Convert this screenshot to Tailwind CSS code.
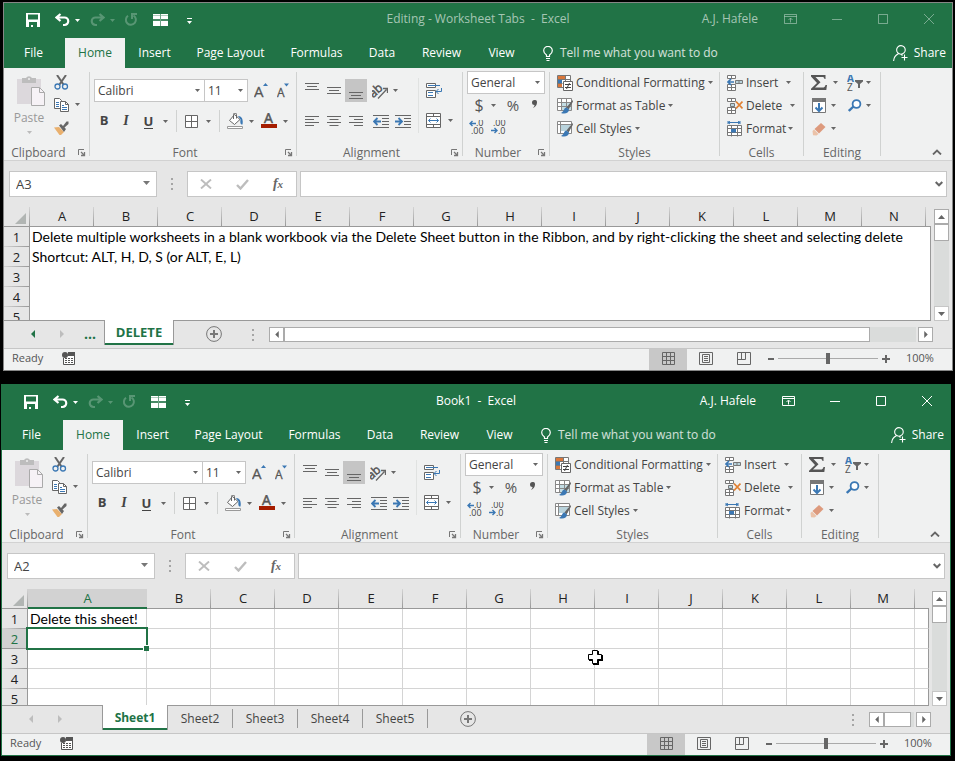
<!DOCTYPE html>
<html lang="en">
<head>
<meta charset="utf-8">
<title>Excel - Worksheet Tabs</title>
<script src="https://cdn.jsdelivr.net/npm/@tailwindcss/browser@4"></script>
</head>
<body class="bg-black min-h-screen pt-[2px] font-['Open_Sans',sans-serif] text-xs text-[#444]">

<!-- Shared icons -->
<svg class="hidden" aria-hidden="true">
  <symbol id="caret" viewBox="0 0 5 3"><path d="M0 0h5L2.5 3z" fill="currentColor"/></symbol>
  <symbol id="save" viewBox="0 0 14 14"><path fill="currentColor" fill-rule="evenodd" d="M0 0h14v14H0zM2 1.500v5h10v-5zM3 9v5h2v-2h2v2h4V9z"/></symbol>
  <symbol id="undo" viewBox="0 0 15 14"><path d="M5.500 1 1.500 4.500l4 3.500M2 4.500h7.500a3.500 3.500 0 0 1 0 7.500H8" fill="none" stroke="currentColor" stroke-width="2.200"/></symbol>
  <symbol id="repeat" viewBox="0 0 14 14"><path d="M9.500 2.500A5 5 0 1 1 4 2.700M8 6V1h5" fill="none" stroke="currentColor" stroke-width="2"/></symbol>
  <symbol id="split" viewBox="0 0 15 12"><path fill="currentColor" d="M0 0h7v5H0zM8 0h7v5H8zM0 7h7v5H0zM8 7h7v5H8z"/><path stroke="#217346" d="M0 1.500h7M8 1.500h7" opacity=".35"/><path d="M0 6h15M7.500 0v12" stroke="currentColor" opacity=".35"/></symbol>
  <symbol id="more" viewBox="0 0 5 6"><path fill="currentColor" d="M0 0h5v1H0zM0 3h5L2.500 6z"/></symbol>
  <symbol id="ribbonopt" viewBox="0 0 13 10"><path d="M.5.5h12v9H.5zM.5 2.500h12M6.500 8.500v-4M4.500 6l2-2 2 2" fill="none" stroke="currentColor"/></symbol>
  <symbol id="min" viewBox="0 0 10 10"><path d="M0 5.500h10" stroke="currentColor"/></symbol>
  <symbol id="max" viewBox="0 0 10 10"><path d="M.5.500h9v9h-9z" fill="none" stroke="currentColor"/></symbol>
  <symbol id="close" viewBox="0 0 10 10"><path d="M0 0l10 10M10 0L0 10" stroke="currentColor"/></symbol>
  <symbol id="bulb" viewBox="0 0 10 15"><path d="M3.500 10.500V9C1.500 7.500.7 6.500.7 4.700a4.300 4.300 0 0 1 8.600 0C9.300 6.500 8.500 7.500 6.500 9v1.500zM3 12.500h4M3.500 14.500h3" fill="none" stroke="currentColor" stroke-width="1.200"/></symbol>
  <symbol id="person" viewBox="0 0 15 16"><path d="M8 .6a4.300 4.300 0 1 1-.1 8.600A4.300 4.300 0 0 1 8 .6zM.6 16c.2-3.500 2-6 4.800-7.300M11.500 9.500v6M8.500 12.500h6M8.500 9.500l1 1" fill="none" stroke="currentColor" stroke-width="1.100"/></symbol>
  <symbol id="paste" viewBox="0 0 28 30"><path fill="#dcd8dc" d="M0 3h24v25H0z"/><path fill="#bdbdbd" d="M5 2h4a3.500 3.500 0 0 1 6 0h4v5H5z"/><circle cx="12" cy="3" r="1" fill="#f0f1f1"/><path d="M14.500 11.500h8l5 5v13h-13z" fill="#f6f2f6" stroke="#aaa"/><path d="M22.500 11.500v5h5" fill="none" stroke="#aaa"/></symbol>
  <symbol id="cut" viewBox="0 0 15 15"><path d="M3 0l6.500 9.500M12 0L5.500 9.500" stroke="#666" stroke-width="2"/><circle cx="3.500" cy="11.500" r="2.500" fill="none" stroke="#3b78b4" stroke-width="1.300"/><circle cx="11" cy="11.500" r="2.500" fill="none" stroke="#3b78b4" stroke-width="1.300"/></symbol>
  <symbol id="copy" viewBox="0 0 15 14"><path d="M.5.5h5l2 2v8h-7z" fill="#fff" stroke="#666"/><path d="M2 4.500h3M2 6.500h3M2 8.500h3" stroke="#3b78b4"/><path d="M6.500 3.500h5l3 3v7h-8z" fill="#fff" stroke="#666"/><path d="M11.500 3.500v3h3" fill="none" stroke="#666"/><path d="M8 7.500h2M8 9.500h5M8 11.500h5" stroke="#3b78b4"/></symbol>
  <symbol id="brush" viewBox="0 0 15 14"><path fill="#e9b06e" d="M0 6.500l5-.5 5 5-3 3h-1.500z"/><path fill="#666" d="M5 4.500l2-1.500 2 2 3.500-4.500h2V3l-4 3.500L12 8l-2 3z"/></symbol>
  <symbol id="launch" viewBox="0 0 8 8"><path d="M.5 6V.5H6" fill="none" stroke="#777"/><path d="M3 3l3 3M6.500 3v3.500H3" fill="none" stroke="#777" stroke-width="1.300"/></symbol>
  <symbol id="grow" viewBox="0 0 16 16"><text x="0" y="14" font-family="Open Sans" font-size="15" fill="#555" stroke="#555" stroke-width=".3">A</text><path fill="#3b78b4" d="M9 3h5l-2.500-3z"/></symbol>
  <symbol id="shrink" viewBox="0 0 16 16"><text x="0" y="14" font-family="Open Sans" font-size="12" fill="#555" stroke="#555" stroke-width=".3">A</text><path fill="#3b78b4" d="M7 .5h5l-2.500 3z"/></symbol>
  <symbol id="borders" viewBox="0 0 13 13"><path d="M.5.5h12v12H.5zM6.500.5v12M.5 6.500h12" fill="#fff" stroke="#666"/></symbol>
  <symbol id="bucket" viewBox="0 0 16 16"><path d="M7.500 1.500L2.500 7.500 7.500 11.500l5.500-5z" fill="#fff" stroke="#666"/><path d="M6.500 6V1.500a1.500 1.500 0 0 1 3 0v4" fill="none" stroke="#666"/><path d="M11 3c3.500 0 5.500 3 4.500 8.500-2 0-2.500-1.500-2-5z" fill="#3b78b4"/><path d="M.5 13.500h15v2H.5z" fill="#fff" stroke="#999"/></symbol>
  <symbol id="fontcolor" viewBox="0 0 16 16"><text x="3" y="10" font-family="Open Sans" font-size="14" fill="#555" stroke="#555" stroke-width=".5">A</text><path fill="#a51d00" d="M0 11h16v4H0z"/></symbol>
  <symbol id="vtop" viewBox="0 0 14 16"><path d="M0 .5h14M2 3.500h10M0 6.500h14" stroke="#666"/></symbol>
  <symbol id="vmid" viewBox="0 0 14 16"><path d="M0 4.500h14M2 7.500h10M0 10.500h14" stroke="#666"/></symbol>
  <symbol id="vbot" viewBox="0 0 14 16"><path d="M0 8.500h14M2 11.500h10M0 14.500h14" stroke="#666"/></symbol>
  <symbol id="hleft" viewBox="0 0 14 11"><path d="M0 .5h14M0 3.500h9M0 6.500h14M0 9.500h9" stroke="#666"/></symbol>
  <symbol id="hmid" viewBox="0 0 14 11"><path d="M0 .5h14M2.500 3.500h9M0 6.500h14M2.500 9.500h9" stroke="#666"/></symbol>
  <symbol id="hright" viewBox="0 0 14 11"><path d="M0 .5h14M5 3.500h9M0 6.500h14M5 9.500h9" stroke="#666"/></symbol>
  <symbol id="orient" viewBox="0 0 16 16"><text x="-2" y="11" font-family="Open Sans" font-size="12" fill="#555" stroke="#555" stroke-width=".5" transform="rotate(-42 5 9)">ab</text><path d="M6 15.500L14.500 6.500M11 5.500h4.500v4.500" fill="none" stroke="#666" stroke-width="1.300"/></symbol>
  <symbol id="outdent" viewBox="0 0 16 13"><path d="M0 .5h16M9 3.500h7M9 6.500h7M9 9.500h7M0 12.500h16" stroke="#666"/><path d="M1 6.500h7M4.500 3L1 6.500 4.500 10" fill="none" stroke="#3b78b4" stroke-width="1.800"/></symbol>
  <symbol id="indent" viewBox="0 0 16 13"><path d="M0 .5h16M9 3.500h7M9 6.500h7M9 9.500h7M0 12.500h16" stroke="#666"/><path d="M0 6.500h7M3.500 3L7 6.500 3.500 10" fill="none" stroke="#3b78b4" stroke-width="1.800"/></symbol>
  <symbol id="wrap" viewBox="0 0 16 15"><path d="M.5.5h9v4h-9zM.5 7.500h9v7h-9z" fill="#fff" stroke="#666"/><path d="M2 2.500h12M2 9.500h5M2 12.500h5M15.500 5v3.500H10M12.500 6L10 8.500l2.500 2.500" fill="none" stroke="#3b78b4"/></symbol>
  <symbol id="merge" viewBox="0 0 15 15"><path d="M.5.5h14v14H.5zM.5 3.500h14M.5 11.500h14M7.500.5v3M7.500 11.500v3" fill="#fff" stroke="#666"/><path d="M2.500 7.500h10M4.500 5.500l-2 2 2 2M10.500 5.500l2 2-2 2" fill="none" stroke="#3b78b4"/></symbol>
  <symbol id="incdec" viewBox="0 0 16 14"><text x="7" y="6" font-family="Open Sans" font-size="9" fill="#444">.0</text><text x="2" y="14" font-family="Open Sans" font-size="9" fill="#444">.00</text><path d="M1 3.500h6M3.500 1L1 3.500 3.500 6" fill="none" stroke="#3b78b4" stroke-width="1.400"/></symbol>
  <symbol id="decdec" viewBox="0 0 16 14"><text x="2" y="6" font-family="Open Sans" font-size="9" fill="#444">.00</text><text x="7" y="14" font-family="Open Sans" font-size="9" fill="#444">.0</text><path d="M0 10.500h6M3.500 8L6 10.500 3.500 13" fill="none" stroke="#3b78b4" stroke-width="1.400"/></symbol>
  <symbol id="cond" viewBox="0 0 16 16"><path d="M.5.5h13v12H.5z" fill="#fff" stroke="#777"/><path fill="#d9773b" d="M1 1h7v3H1zM1 8h4v4H1z"/><path fill="#3b78b4" d="M1 4.500h4V8H1z"/><path d="M8.500.5v6M.5 4.500h13M.5 8.500h5" stroke="#777"/><path d="M6.500 6.500h9v9h-9z" fill="#fff" stroke="#666"/><path d="M8 9.500h6M8 12.500h6M12.500 8l-3 6" stroke="#444"/></symbol>
  <symbol id="fmttable" viewBox="0 0 16 16"><path d="M.5.5h14v12H.5z" fill="#fff" stroke="#888"/><path fill="#c3dde4" d="M5 4h9v8H5z"/><path d="M4.500.5v12M9.500.5v12M.5 4.500h14M.5 8.500h14" stroke="#888"/><path d="M15.500 2L9.500 9.500l2 2 4.500-8z" fill="#666"/><path d="M9.500 9.500c-3 .5-2 4-5.500 5.500 4 1.500 8 0 8-3.500z" fill="#3b78b4"/></symbol>
  <symbol id="cellsty" viewBox="0 0 16 16"><path d="M.5.5h14v12H.5z" fill="#fff" stroke="#888"/><path fill="#b9d3dc" d="M4 4h9v6H4z"/><path d="M3.500.5v12M.5 3.500h14" stroke="#888"/><path d="M15.500 2L9.500 9.500l2 2 4.500-8z" fill="#666"/><path d="M9.500 9.500c-3 .5-2 4-5.500 5.500 4 1.500 8 0 8-3.500z" fill="#3b78b4"/></symbol>
  <symbol id="cins" viewBox="0 0 16 16"><path d="M.5.5h8v3h-8zM4.500.5v3M.5 9.500h8v6h-8zM4.500 9.500v6M.5 12.500h8" fill="#fff" stroke="#777"/><path d="M8.500 5.500h7v3h-7z" fill="#b9d3dc" stroke="#777"/><path d="M12 5.500v3" stroke="#777"/><path d="M1 7h6M4 4L1 7l3 3" fill="none" stroke="#3b78b4" stroke-width="1.700"/></symbol>
  <symbol id="cdel" viewBox="0 0 16 16"><path d="M.5.500h8v3h-8zM4.500.5v3M.5 9.500h8v6h-8zM4.500 9.500v6M.5 12.500h8" fill="#fff" stroke="#777"/><path d="M3.500 5.500h4v3h-4z" fill="#b9d3dc" stroke="#777"/><path d="M9 3.500l6.500 7M15.500 3.500l-6.500 7" stroke="#e08032" stroke-width="1.800"/></symbol>
  <symbol id="cfmt" viewBox="0 0 16 16"><path d="M1 1.500h12M1 0v3M13 0v3M3 0L1 1.500 3 3M11 0l2 1.500L11 3" fill="none" stroke="#3b78b4"/><path d="M.5 4.500h14v10H.5z" fill="#fff" stroke="#777"/><path d="M4.500 4.500v11M10.500 4.500v11M.5 7.500h14M.5 11.500h14" stroke="#777"/><path fill="#3b78b4" d="M4 8h5v3.500H4z"/></symbol>
  <symbol id="sum" viewBox="0 0 16 15"><path fill="#555" d="M0 0h14.500v4h-1c-.3-1.500-.8-2-2.500-2H4.500l5 5.300L4 12.500h7.500c1.700 0 2.500-.5 3-2.500H16l-.7 5H0v-1.300L6 8 0 1.500z"/></symbol>
  <symbol id="fill" viewBox="0 0 14 15"><path d="M.5.5h13v14H.5z" fill="#fff" stroke="#777"/><path fill="#777" d="M0 0h14v4H0z"/><path d="M7 5v8M3.500 9.500L7 13l3.500-3.500" fill="none" stroke="#3b78b4" stroke-width="2"/></symbol>
  <symbol id="eraser" viewBox="0 0 14 14"><path fill="#dd9a7d" d="M9 1l4.500 4L7 11.500 2.500 7z"/><path fill="#ebc2a8" d="M2 7.500L6.500 12l-2 1.500-3.500-.3L.5 9z"/></symbol>
  <symbol id="sort" viewBox="0 0 16 16"><text x="0" y="7" font-family="Open Sans" font-size="10" font-weight="bold" fill="#3b78b4">A</text><text x="0" y="16" font-family="Open Sans" font-size="10" fill="#555">Z</text><path fill="#666" d="M8 5h8v1.500L13 9v4h-2V9L8 6.500z"/></symbol>
  <symbol id="find" viewBox="0 0 14 13"><circle cx="8.500" cy="5" r="3.900" fill="#fff" stroke="#3b78b4" stroke-width="1.800"/><path d="M5.500 7.500L.8 12" stroke="#3b78b4" stroke-width="2.400"/></symbol>
  <symbol id="chevup" viewBox="0 0 10 6"><path d="M1 5.500l4-4 4 4" fill="none" stroke="#666" stroke-width="1.800"/></symbol>
  <symbol id="chevdn" viewBox="0 0 8 6"><path d="M.7 1L4 4.300 7.300 1" fill="none" stroke="#666" stroke-width="2"/></symbol>
  <symbol id="xmark" viewBox="0 0 12 10"><path d="M1 .5l10 9M11 .5l-10 9" stroke="#bdbdbd" stroke-width="1.900"/></symbol>
  <symbol id="check" viewBox="0 0 13 11"><path d="M1 6l3.500 3.500L12 1" fill="none" stroke="#bdbdbd" stroke-width="2.400"/></symbol>
  <symbol id="dots" viewBox="0 0 2 12"><path fill="#a5a5a5" d="M0 0h2v2H0zM0 5h2v2H0zM0 10h2v2H0z"/></symbol>
  <symbol id="corner" viewBox="0 0 11 11"><path fill="#b1b5b3" d="M11 0v11H0z"/></symbol>
  <symbol id="plus" viewBox="0 0 16 16"><circle cx="8" cy="8" r="7.400" fill="none" stroke="#777"/><path d="M8 4v8M4 8h8" stroke="#777" stroke-width="2"/></symbol>
  <symbol id="tril" viewBox="0 0 4 8"><path fill="currentColor" d="M4 0v8L0 4z"/></symbol>
  <symbol id="trir" viewBox="0 0 4 8"><path fill="currentColor" d="M0 0v8l4-4z"/></symbol>
  <symbol id="triu" viewBox="0 0 7 4"><path fill="currentColor" d="M0 4h7L3.500 0z"/></symbol>
  <symbol id="trid" viewBox="0 0 7 4"><path fill="currentColor" d="M0 0h7L3.500 4z"/></symbol>
  <symbol id="macro" viewBox="0 0 13 13"><path d="M1.500 6v6.500h11V1H7" fill="#fff" stroke="#555"/><path fill="#555" d="M6 0h7v4H6z"/><circle cx="3" cy="3" r="3" fill="#555"/><path d="M3 6.500h8M3 8.500h8M3 10.500h8" stroke="#555" stroke-dasharray="2 1"/></symbol>
  <symbol id="vnormal" viewBox="0 0 13 13"><path d="M.5.5h12v12H.5zM4.500.5v12M8.500.5v12M.5 4.500h12M.5 8.500h12" fill="none" stroke="#666"/></symbol>
  <symbol id="vlayout" viewBox="0 0 14 13"><path d="M.5.5h13v12H.5zM3.500 2.500h7v8h-7zM5 4.500h4M5 6.500h4M5 8.500h4" fill="none" stroke="#666"/></symbol>
  <symbol id="vbreak" viewBox="0 0 14 13"><path d="M.5.5h13v12H.5zM.5 7.500h8v-7M4.500.5v7" fill="none" stroke="#666"/></symbol>
  <symbol id="cellcursor" viewBox="0 0 15 15"><path d="M5 1h6v4h4v6h-4v4H5v-4H1V5h4z" fill="#000"/><path d="M4.500.5h5v4h4v5h-4v4h-5v-4h-4v-5h4z" fill="#fff" stroke="#000"/></symbol>
</svg>

<main id="desk" class="flex flex-col gap-[13px]"></main>

<script>
const ic = (id, size, extra = '') => `<svg class="shrink-0 ${size} ${extra}" aria-hidden="true"><use href="#${id}"/></svg>`;
const caret = (extra = 'text-[#666]') => ic('caret', 'w-[5px] h-[3px]', extra);
const btn = (label, cls, inner) => `<button type="button" aria-label="${label}" class="flex items-center justify-center shrink-0 ${cls}">${inner}</button>`;
const drop = label => btn(label + ' options', 'w-[5px] h-5', caret());
const sep = '<div class="w-px my-1 bg-[#d0d2d1] shrink-0"></div>';
const combo = (id, label, value, cls) => `
  <div class="relative shrink-0 h-[23px] ${cls}">
    <select id="${id}" aria-label="${label}" class="appearance-none w-full h-full border border-[#c6c6c6] bg-white pl-[3px] text-[#444] outline-none"><option>${value}</option></select>
    ${ic('caret', 'w-[5px] h-[3px]', 'absolute right-[5px] top-[10px] text-[#666] pointer-events-none')}
  </div>`;
const group = (label, width, body, launcher = true) => `
  <section aria-label="${label}" class="flex flex-col shrink-0 ${width}">
    <div class="flex-1 flex">${body}</div>
    <div class="flex h-[15px] items-center text-[#666] leading-4">
      <span class="flex-1 text-center">${label}</span>
      ${launcher ? btn(label + ' settings', 'w-4 h-4', ic('launch', 'w-[8px] h-[8px]', 'ml-[2px] mt-px')) : ''}
    </div>
  </section>${sep}`;
const textBtn = (icon, text, gap) => `<button type="button" class="flex items-center h-[23px] text-[#444] whitespace-nowrap">${ic(icon, 'w-4 h-4')}<span class="ml-[3px]">${text}</span>${ic('caret', 'w-[5px] h-[3px]', gap + ' text-[#666]')}</button>`;

const ribbon = k => `
<div class="flex h-[92px] bg-[#f0f1f1]">
  ${group('Clipboard', 'w-[85px]', `
    <button type="button" class="flex flex-col items-center w-[42px] ml-[4px] pt-2 text-[#999]">${ic('paste', 'w-[28px] h-[30px]', 'ml-[4px]')}<span class="mt-[3px] leading-[18px]">Paste</span>${ic('caret', 'w-[5px] h-[3px]', 'mt-[4px] text-[#bbb]')}</button>
    <div class="flex flex-col ml-[4px] pt-[3px]">
      ${btn('Cut', 'w-[15px] h-[22px]', ic('cut', 'w-[15px] h-[15px]'))}
      <div class="flex items-center">${btn('Copy', 'w-[15px] h-[23px]', ic('copy', 'w-[15px] h-[14px]'))}<div class="w-[6px]"></div>${drop('Copy')}</div>
      ${btn('Format Painter', 'w-[15px] h-[23px]', ic('brush', 'w-[15px] h-[14px]'))}
    </div>`)}
  ${group('Font', 'w-[206px]', `
    <div class="flex flex-col pt-[11px]">
      <div class="flex items-center pl-1">
        ${combo('font' + k, 'Font', 'Calibri', 'w-[111px]')}
        ${combo('size' + k, 'Font size', '11', 'w-[44px] -ml-px')}
        ${btn('Increase font size', 'w-[16px] h-5 ml-[6px]', ic('grow', 'w-4 h-4'))}
        ${btn('Decrease font size', 'w-[16px] h-5 ml-[7px]', ic('shrink', 'w-4 h-4'))}
      </div>
      <div class="flex items-center h-[22px] mt-[8px] pl-[3px] text-[#444]">
        ${btn('Bold', 'w-[22px]', '<b class="text-[13px]">B</b>')}
        ${btn('Italic', 'w-[22px]', `<i class="text-[14px] font-['Liberation_Serif',serif] font-bold">I</i>`)}
        ${btn('Underline', 'w-[23px]', '<span class="text-[13px] leading-[14px] font-bold border-b border-[#444]">U</span>')}
        ${btn('Underline options', 'w-[11px] h-5', caret())}
        <div class="w-px h-[22px] ml-[5px] bg-[#d0d2d1]"></div>
        ${btn('Borders', 'w-[29px]', ic('borders', 'w-[13px] h-[13px]'))}${drop('Borders')}
        <div class="w-px h-[22px] ml-[8px] bg-[#d0d2d1]"></div>
        ${btn('Fill Color', 'w-[29px]', ic('bucket', 'w-4 h-4'))}${drop('Fill Color')}
        ${btn('Font Color', 'w-[29px]', ic('fontcolor', 'w-4 h-4'))}${drop('Font Color')}
      </div>
    </div>`)}
  ${group('Alignment', 'w-[165px]', `
    <div class="flex flex-col w-[121px] pt-[11px] pl-1">
      <div class="flex items-center h-[23px]">
        ${btn('Top Align', 'w-[22px]', ic('vtop', 'w-[14px] h-4'))}
        ${btn('Middle Align', 'w-[22px]', ic('vmid', 'w-[14px] h-4'))}
        ${btn('Bottom Align', 'w-[22px] h-[23px] bg-[#c5c5c5]', ic('vbot', 'w-[14px] h-4', 'mt-[3px]'))}
        ${btn('Orientation', 'w-[26px]', ic('orient', 'w-4 h-4'))}${drop('Orientation')}
      </div>
      <div class="flex items-center h-[22px] mt-[8px]">
        ${btn('Align Left', 'w-[22px]', ic('hleft', 'w-[14px] h-[11px]'))}
        ${btn('Center', 'w-[22px]', ic('hmid', 'w-[14px] h-[11px]'))}
        ${btn('Align Right', 'w-[22px]', ic('hright', 'w-[14px] h-[11px]'))}
        ${btn('Decrease Indent', 'w-[22px] ml-[3px]', ic('outdent', 'w-4 h-[13px]'))}
        ${btn('Increase Indent', 'w-[22px]', ic('indent', 'w-4 h-[13px]'))}
      </div>
    </div>
    <div class="w-px h-[55px] mt-[10px] bg-[#e0e2e1]"></div>
    <div class="flex flex-col pt-[11px]">
      <div class="flex items-center h-[22px]">${btn('Wrap Text', 'w-[29px]', ic('wrap', 'w-4 h-[15px]'))}</div>
      <div class="flex items-center h-[22px] mt-[8px]">${btn('Merge', 'w-[29px]', ic('merge', 'w-[15px] h-[15px]'))}${drop('Merge')}</div>
    </div>`)}
  ${group('Number', 'w-[86px]', `
    <div class="flex flex-col pt-[3px] pl-1">
      ${combo('num' + k, 'Number format', 'General', 'w-[78px]')}
      <div class="flex items-center h-[22px] text-[#555]">
        ${btn('Accounting', 'w-[24px]', '<span class="text-base">$</span>')}${drop('Accounting')}
        ${btn('Percent', 'w-[34px]', '<span class="text-[15px]">%</span>')}
        ${btn('Comma', 'w-[8px]', `<svg class="w-[5px] h-[8px] mb-[3px]" viewBox="0 0 5 8"><path d="M2.500 0a2.300 2.300 0 0 1 2.500 2.500C5 5 3.500 7 1 8c1-1.300 1.500-2 1.500-3A2.300 2.300 0 0 1 2.500 0z" fill="#555"/></svg>`)}
      </div>
      <div class="flex items-center h-[22px] pl-[2px] gap-[6px]">
        ${btn('Increase Decimal', 'w-4', ic('incdec', 'w-4 h-[14px]', 'overflow-visible'))}
        ${btn('Decrease Decimal', 'w-4', ic('decdec', 'w-4 h-[14px]', 'overflow-visible'))}
      </div>
    </div>`)}
  ${group('Styles', 'w-[169px]', `
    <div class="flex flex-col items-start pt-[3px] pl-[7px]">
      ${textBtn('cond', 'Conditional Formatting', 'ml-[3px]')}
      ${textBtn('fmttable', 'Format as Table', 'ml-[3px]')}
      ${textBtn('cellsty', 'Cell Styles', 'ml-[3px]')}
    </div>`, false)}
  ${group('Cells', 'w-[83px]', `
    <div class="flex flex-col items-start pt-[3px] pl-[7px]">
      ${textBtn('cins', 'Insert', 'ml-[8px]')}
      ${textBtn('cdel', 'Delete', 'ml-[8px]')}
      ${textBtn('cfmt', 'Format', 'ml-[2px]')}
    </div>`, false)}
  ${group('Editing', 'w-[76px]', `
    <div class="flex flex-col pt-[3px] pl-[7px]">
      <div class="flex items-center h-[23px]">${btn('AutoSum', 'w-4', ic('sum', 'w-4 h-[15px]'))}<div class="w-[6px]"></div>${drop('AutoSum')}<div class="w-[9px]"></div>${btn('Sort and Filter', 'w-4', ic('sort', 'w-4 h-4'))}<div class="w-[3px]"></div>${drop('Sort')}</div>
      <div class="flex items-center h-[23px]">${btn('Fill', 'w-4', ic('fill', 'w-[14px] h-[15px]'))}<div class="w-[4px]"></div>${drop('Fill')}<div class="w-[11px]"></div>${btn('Find and Select', 'w-4', ic('find', 'w-[14px] h-[13px]'))}<div class="w-[3px]"></div>${drop('Find')}</div>
      <div class="flex items-center h-[23px]">${btn('Clear', 'w-4', ic('eraser', 'w-[14px] h-[14px]'))}<div class="w-[4px]"></div>${drop('Clear')}</div>
    </div>`, false)}
  <div class="flex-1 flex items-end justify-end pr-[10px] pb-[5px]">${btn('Collapse the Ribbon', 'w-[10px]', ic('chevup', 'w-[10px] h-[6px]'))}</div>
</div>`;

const vline = 'bg-[linear-gradient(to_bottom,#d4d4d4,#999)] bg-[length:1px_100%] bg-right bg-no-repeat';
const hline = 'bg-[linear-gradient(to_right,#d4d4d4,#999)] bg-[length:100%_1px] bg-bottom bg-no-repeat';

function sheet(o) {
  const cols = o.columns.split('');
  const head = cols.map((c, i) => `<th scope="col" class="h-5 p-0 pb-px font-normal leading-4 border-b ${o.sel && i === 0
      ? 'bg-[#d2d2d2] text-[#217346] border-b-2 border-[#217346]' : 'text-[#222] border-[#999] ' + vline}">${c}</th>`).join('');
  const line = o.grid ? 'border-r border-b border-[#d4d4d4]' : '';
  const rows = [1, 2, 3, 4, 5].map((n, r) => `<tr class="h-5">
      <th scope="row" class="p-0 h-5 font-normal border-r border-[#999] ${o.sel && r === 1 ? 'bg-[#d2d2d2]! text-[#217346] border-b' : 'text-[#222] ' + hline}">${n}</th>
      ${cols.map((c, i) => `<td class="relative p-0 h-5 ${line} ${i === 0 ? "pl-[2px] font-['Lato',sans-serif] text-sm leading-[18px] text-black whitespace-nowrap [font-variant-ligatures:none]" : ''}">${i === 0 && o.text[r] ? o.text[r] : ''}${o.sel && i === 0 && r === 1
        ? '<span class="absolute z-10 -left-[2px] -top-[2px] -right-[2px] -bottom-[2px] border-2 border-[#217346]"><span class="absolute -right-[3px] -bottom-[3px] w-[6px] h-[6px] bg-[#217346] border-l border-t border-white"></span></span>' : ''}</td>`).join('')}
      <td class="p-0 border-r border-r-[#999] ${o.grid ? 'border-b border-b-[#d4d4d4]' : ''}"></td>
    </tr>`).join('');
  return `
  <div class="flex">
    <div class="relative flex-1 min-w-0 overflow-hidden border-b border-[#999] ${o.height}">
      <table class="table-fixed w-full border-separate border-spacing-0 bg-white text-[13px] leading-[18px]">
        <colgroup><col class="w-[26px]">${cols.map((c, i) => `<col class="${i === 0 ? o.first : 'w-[64px]'}">`).join('')}<col></colgroup>
        <thead class="bg-[#e6e6e6]"><tr>
          <th class="h-5 p-0 border-b border-[#999] ${vline}">${ic('corner', 'w-[11px] h-[11px]', 'ml-[11px] mt-[3px]')}</th>${head}<th class="p-0 border-b border-[#999]"></th></tr></thead>
        <tbody class="[&_th]:bg-[#e6e6e6]">${rows}</tbody>
      </table>
      ${o.sel ? ic('cellcursor', 'w-[15px] h-[15px]', 'absolute left-[586px] top-[61px]') : ''}
    </div>
    <div class="flex flex-col w-[21px] pl-[3px] pr-[3px] pt-[2px] text-[#666]">
      ${btn('Scroll up', 'h-[15px] w-full border border-[#ababab] bg-white', ic('triu', 'w-[7px] h-[4px]'))}
      <div class="flex-1 bg-[#dadcdb]"><div class="h-[17px] border border-[#ababab] bg-white"></div></div>
      ${btn('Scroll down', 'h-[15px] w-full border border-[#c6c6c6] bg-white', ic('trid', 'w-[7px] h-[4px]'))}
    </div>
  </div>`;
}

function excel(o, k) {
  const dim = o.active ? 'text-white' : 'text-white/60';
  const ctl = o.active ? 'text-white' : 'text-white/40';
  const tabs = [['File', 'w-[59px]'], ['Home', 'w-[60px] ml-[2px] bg-[#f0f1f1] text-[#217346]'], ['Insert', 'w-[59px]'], ['Page Layout', 'w-[93px]'],
    ['Formulas', 'w-[79px]'], ['Data', 'w-[52px]'], ['Review', 'w-[67px]'], ['View', 'w-[53px]']];
  return `
<article aria-label="${o.title}" class="border ${o.frame} bg-[#e6e6e6]">
  <header class="bg-[#217346] text-white">
    <div class="grid grid-cols-[1fr_auto_1fr] items-center h-[35px] pb-[3px]">
      <div class="flex items-center pl-[22px] pt-[2px] text-white">
        ${btn('Save', 'w-[14px]', ic('save', 'w-[14px] h-[14px]'))}
        ${btn('Undo', 'w-[15px] ml-[15px]', ic('undo', 'w-[15px] h-[14px]'))}
        ${btn('Undo list', 'w-[5px] ml-[5px]', caret('text-white'))}
        ${btn('Redo', 'w-[15px] ml-[10px] text-white/25', ic('undo', 'w-[15px] h-[14px]', '-scale-x-100'))}
        ${btn('Redo list', 'w-[5px] ml-[5px]', caret('text-white/25'))}
        ${btn('Repeat', 'w-[14px] ml-[9px] text-white/25', ic('repeat', 'w-[14px] h-[14px]'))}
        ${btn('View side by side', 'w-[15px] ml-[15px]', ic('split', 'w-[15px] h-[12px]'))}
        ${btn('Customize toolbar', 'w-[5px] ml-[19px]', ic('more', 'w-[5px] h-[6px]', 'mt-[2px]'))}
      </div>
      <h1 class="${dim} whitespace-pre">${o.title}</h1>
      <div class="flex items-center justify-end">
        <span class="mr-[10px] ${dim}">A.J. Hafele</span>
        <div class="flex ${ctl}">
          ${btn('Ribbon display options', 'w-[46px] h-8', ic('ribbonopt', 'w-[13px] h-[10px]', 'mr-px'))}
          ${btn('Minimize', 'w-[46px] h-8', ic('min', 'w-[10px] h-[10px]'))}
          ${btn('Maximize', 'w-[46px] h-8', ic('max', 'w-[10px] h-[10px]'))}
          ${btn('Close', 'w-[46px] h-8', ic('close', 'w-[10px] h-[10px]'))}
        </div>
      </div>
    </div>
    <nav class="flex h-[30px]">
      ${tabs.map(t => `<button type="button" class="shrink-0 ${t[1]}">${t[0]}</button>`).join('')}
      <button type="button" class="flex items-center ml-[15px] text-white/80">${ic('bulb', 'w-[10px] h-[15px]', 'text-white')}<span class="ml-[7px]">Tell me what you want to do</span></button>
      <button type="button" class="flex items-center ml-auto mr-[6px]">${ic('person', 'w-[15px] h-4')}<span class="ml-[6px]">Share</span></button>
    </nav>
  </header>
  ${ribbon(k)}
  <div class="flex items-center border-t border-[#d2d2d2] px-[5px] py-[10px]">
    <div class="relative w-[148px] h-[26px]">
      <input id="name${k}" aria-label="Name Box" value="${o.cell}" class="w-full h-full border border-[#c6c6c6] bg-white pl-[6px] text-[13px] text-[#444] outline-none">
      ${ic('trid', 'w-[7px] h-[4px]', 'absolute right-[7px] top-[10px] text-[#777]')}
    </div>
    ${ic('dots', 'w-[2px] h-[12px]', 'mx-[14px]')}
    <div class="flex items-center justify-around w-[110px] h-[26px] border border-[#c6c6c6] bg-white">
      ${btn('Cancel', 'w-5', ic('xmark', 'w-3 h-[10px]'))}
      ${btn('Enter', 'w-5', ic('check', 'w-[13px] h-[11px]'))}
      ${btn('Insert Function', 'w-5', `<i class="font-['Liberation_Serif',serif] font-bold text-[#666] text-sm leading-4">f<span class="text-[11px]">x</span></i>`)}
    </div>
    <div class="relative flex-1 h-[26px] ml-[3px]">
      <input id="formula${k}" aria-label="Formula bar" class="w-full h-full border border-[#c6c6c6] bg-white px-2 outline-none">
      ${ic('chevdn', 'w-[8px] h-[6px]', 'absolute right-[4px] top-[10px]')}
    </div>
  </div>
  ${sheet(o)}
  <div class="flex items-stretch h-[27px]">
    <div class="flex items-center w-[100px] shrink-0 -mt-[2px]">
      ${btn('Previous sheet', 'w-1 ml-[27px] ' + o.prev, ic('tril', 'w-1 h-2'))}
      ${btn('Next sheet', 'w-1 ml-[25px] text-[#bdbdbd]', ic('trir', 'w-1 h-2'))}
      ${o.grid ? '' : '<button type="button" aria-label="More sheets" class="ml-[20px] text-sm font-bold text-[#217346]">...</button>'}
    </div>
    ${o.tabs.map((t, i) => i === 0
      ? `<button type="button" class="relative -mt-px h-[25px] pt-px border-x border-[#999] bg-white font-bold text-[#217346] shadow-[inset_0_-2px_#217346] ${o.tabw}">${t}</button>`
      : `<button type="button" class="h-[19px] mt-[3px] w-[65px] border-r border-[#999] leading-[18px] text-[#444]">${t}</button>`).join('')}
    ${btn('New sheet', 'w-4 ml-[32px]', ic('plus', 'w-4 h-4', '-mt-px'))}
    <div class="flex items-center text-[#666] ${o.hscroll} pr-[19px]">
      ${ic('dots', 'w-[2px] h-[12px]', 'mr-[15px]')}
      ${btn('Scroll left', 'w-[15px] h-[15px] border border-[#ababab] bg-white', ic('tril', 'w-1 h-[7px]'))}
      <div class="flex flex-1 h-[15px] bg-[#dadcdb]"><div class="flex-1 border border-[#ababab] bg-white"></div><div class="${o.rest}"></div></div>
      ${btn('Scroll right', 'w-[15px] h-[15px] ml-[2px] border border-[#ababab] bg-white', ic('trir', 'w-1 h-[7px]'))}
    </div>
  </div>
  <footer class="flex items-center h-[22px] border-t border-[#c6c6c6] bg-[#f0f1f1] text-[11px] text-[#555]">
    <span class="ml-[8px] w-[50px] pb-[2px]">Ready</span>
    ${btn('Record macro', 'w-[13px]', ic('macro', 'w-[13px] h-[13px]', 'mb-[2px]'))}
    <div class="ml-auto flex items-center h-full">
      ${btn('Normal view', 'w-[38px] h-full bg-[#c8c8c8]', ic('vnormal', 'w-[13px] h-[13px]', 'mb-[2px]'))}
      ${btn('Page Layout view', 'w-[38px]', ic('vlayout', 'w-[14px] h-[13px]', 'mb-[2px]'))}
      ${btn('Page Break view', 'w-[38px]', ic('vbreak', 'w-[14px] h-[13px]', 'mb-[2px]'))}
      ${btn('Zoom out', 'w-[6px] ml-[5px]', '<span class="w-[6px] h-[2px] mb-[2px] bg-[#666]"></span>')}
      <input id="zoom${k}" aria-label="Zoom" type="range" min="0" max="200" value="100" class="appearance-none w-[100px] h-[11px] mx-1 mb-[2px] bg-transparent bg-[linear-gradient(#aaa,#aaa)] bg-[length:100%_1px] bg-center bg-no-repeat [&::-webkit-slider-thumb]:appearance-none [&::-webkit-slider-thumb]:w-1 [&::-webkit-slider-thumb]:h-[11px] [&::-webkit-slider-thumb]:bg-[#666]">
      ${btn('Zoom in', 'w-[8px]', '<svg class="w-[8px] h-[8px] mb-px" viewBox="0 0 8 8"><path d="M4 0v8M0 4h8" stroke="#666" stroke-width="2"/></svg>')}
      <span class="w-[62px] pl-[16px] pb-[2px]">100%</span>
    </div>
  </footer>
</article>`;
}

const windows = [
  { title: 'Editing - Worksheet Tabs  -  Excel', active: false, frame: 'border-[#868686] ml-[3px] mr-[2px]', cell: 'A3', columns: 'ABCDEFGHIJKLMN',
    first: 'w-[64px]', grid: false, sel: false, height: 'h-[114px]', prev: 'text-[#217346]',
    text: ['Delete multiple worksheets in a blank workbook via the Delete Sheet button in the Ribbon, and by right-clicking the sheet and selecting delete', 'Shortcut: ALT, H, D, S (or ALT, E, L)'],
    tabs: ['DELETE'], tabw: 'w-[70px] text-[13px]', hscroll: 'flex-1 ml-[30px]', rest: 'w-[46px]' },
  { title: 'Book1  -  Excel', active: true, frame: 'border-[#217346] ml-[1px] mr-[4px]', cell: 'A2', columns: 'ABCDEFGHIJKLM',
    first: 'w-[119px]', grid: true, sel: true, height: 'h-[117px]', prev: 'text-[#bdbdbd]', text: ['Delete this sheet!'],
    tabs: ['Sheet1', 'Sheet2', 'Sheet3', 'Sheet4', 'Sheet5'], tabw: 'w-[66px]', hscroll: 'ml-auto w-[98px]', rest: 'w-[3px]' }
];
document.getElementById('desk').innerHTML = windows.map(excel).join('');
</script>
</body>
</html>
